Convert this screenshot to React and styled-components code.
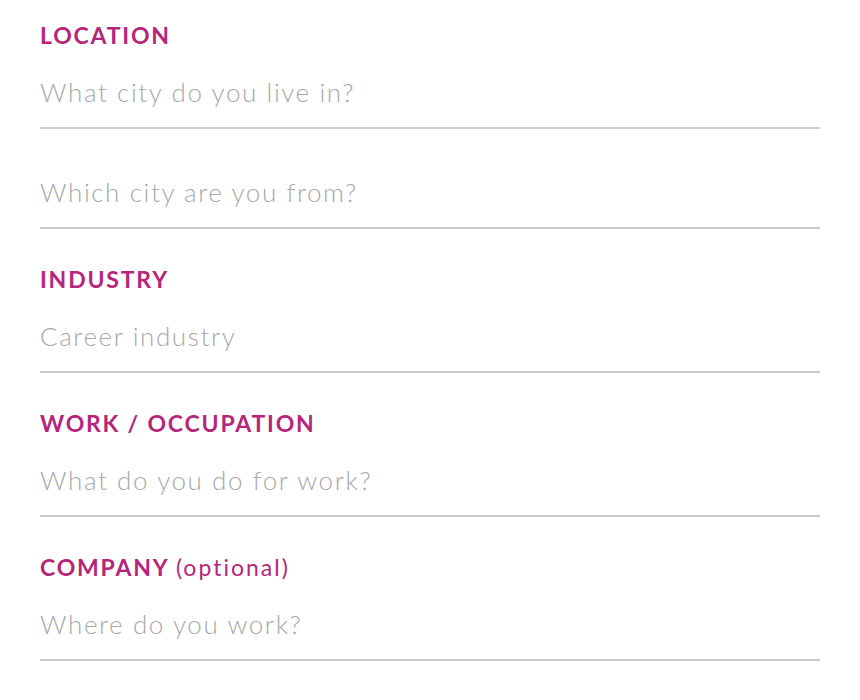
import styled, { createGlobalStyle } from "styled-components";

const GlobalStyle = createGlobalStyle`
  body {
    margin: 0;
    background: #ffffff;
    font-family: "Lato", "Open Sans", sans-serif;
  }
`;

const Form = styled.form`
  padding: 21px 40px 30px 40px;
  display: flex;
  flex-direction: column;
`;

const Field = styled.div`
  display: flex;
  flex-direction: column;
  margin-top: ${(props) => (props.first ? "0" : "36px")};
`;

const Label = styled.label`
  font-size: 23px;
  line-height: 28px;
  font-weight: 700;
  letter-spacing: 1.8px;
  color: #b5267b;
  margin-bottom: 10px;
`;

const Optional = styled.span`
  font-weight: 400;
  letter-spacing: 2px;
  color: #b5267b;
`;

const Input = styled.input`
  height: 70px;
  box-sizing: border-box;
  border: none;
  border-bottom: 2px solid #cccccc;
  padding: 0 0 2px 0;
  margin-top: ${(props) => (props.stacked ? "30px" : "0")};
  font-family: "Lato", "Open Sans", sans-serif;
  font-size: 26px;
  font-weight: 300;
  letter-spacing: 1.6px;
  color: #444;
  outline: none;
  background: transparent;

  &::placeholder {
    color: #a8a8a8;
  }
`;

const App = () => {
  return (
    <>
      <GlobalStyle />
      <Form>
        <Field first>
          <Label>LOCATION</Label>
          <Input placeholder="What city do you live in?" />
          <Input stacked placeholder="Which city are you from?" />
        </Field>
        <Field>
          <Label>INDUSTRY</Label>
          <Input placeholder="Career industry" />
        </Field>
        <Field>
          <Label>WORK / OCCUPATION</Label>
          <Input placeholder="What do you do for work?" />
        </Field>
        <Field>
          <Label>
            COMPANY <Optional>(optional)</Optional>
          </Label>
          <Input placeholder="Where do you work?" />
        </Field>
      </Form>
    </>
  );
};

export default App;
